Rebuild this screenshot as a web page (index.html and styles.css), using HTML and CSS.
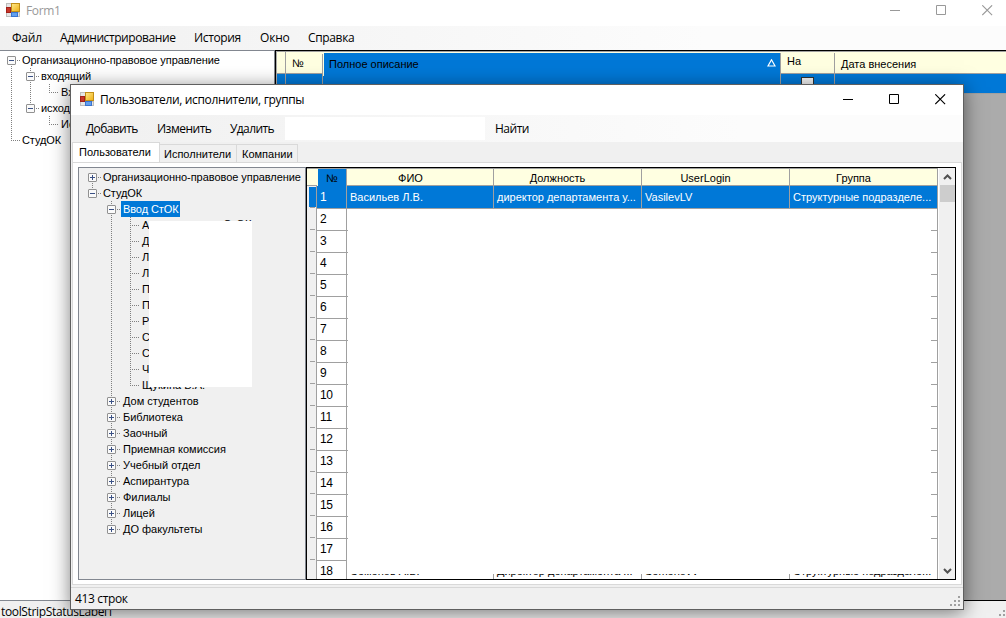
FILE: index.html
```
<!doctype html>
<html lang="ru">
<head>
	<meta charset="UTF-8">
	<title>Form1</title>
	<link rel="stylesheet" href="styles.css">
</head>
<body>
<svg width="0" height="0" class="defs">
	<defs>
		<linearGradient id="gold" x1="0" y1="0" x2="1" y2="1"><stop offset="0" stop-color="#ffe98c"/><stop offset="1" stop-color="#eeb013"/></linearGradient>
		<symbol id="form" viewBox="0 0 14 14">
			<rect width="14" height="14" fill="#bdbdbd"/>
			<path d="M1 1h4v3h-4zM1 10h4v3h-4zM12 10h1v3h-1z" fill="#e6e6e6"/>
			<rect x=".5" y="4.5" width="4" height="5" fill="#c8362a" stroke="#a3221a"/>
			<rect x="5.5" y=".5" width="8" height="8" fill="url(#gold)" stroke="#c28e16"/>
			<rect x="5.5" y="9.5" width="6" height="4" fill="#62a0ee" stroke="#3a74d0"/>
		</symbol>
		<symbol id="min" viewBox="0 0 11 11"><path d="M0 5.5h10" stroke="currentColor"/></symbol>
		<symbol id="max" viewBox="0 0 11 11"><path d="M.5 .5h9v9h-9z" fill="none" stroke="currentColor"/></symbol>
		<symbol id="close" viewBox="0 0 11 11"><path d="M.3 .3l9.8 9.8M10.1 .3l-9.8 9.8" stroke="currentColor" stroke-width="1.1"/></symbol>
		<symbol id="plus" viewBox="0 0 9 9"><rect x=".5" y=".5" width="8" height="8" rx=".5" fill="#fafafa" stroke="#919191"/><path d="M2 4.5h5M4.5 2v5" stroke="#3b5185"/></symbol>
		<symbol id="minus" viewBox="0 0 9 9"><rect x=".5" y=".5" width="8" height="8" rx=".5" fill="#fafafa" stroke="#919191"/><path d="M2 4.5h5" stroke="#3b5185"/></symbol>
		<symbol id="grip" viewBox="0 0 12 12"><path d="M8 0h2v2h-2zM4 4h2v2h-2zM8 4h2v2h-2zM0 8h2v2h-2zM4 8h2v2h-2zM8 8h2v2h-2z" fill="#a0a0a0"/></symbol>
	</defs>
</svg>
<div class="main">
	<div class="title">
		<svg class="form-icon" width="14" height="14"><use href="#form"/></svg>
		<span class="title-text">Form1</span>
		<div class="controls">
			<span class="ctl"><svg width="11" height="11"><use href="#min"/></svg></span>
			<span class="ctl"><svg width="11" height="11"><use href="#max"/></svg></span>
			<span class="ctl"><svg width="11" height="11"><use href="#close"/></svg></span>
		</div>
	</div>
	<div class="menu">
		<span class="m-file">Файл</span>
		<span class="m-admin">Администрирование</span>
		<span class="m-hist">История</span>
		<span class="m-win">Окно</span>
		<span class="m-help">Справка</span>
	</div>
	<div class="work">
		<div class="tree tree-main">
			<div class="node"><i class="c b"><svg width="9" height="9"><use href="#minus"/></svg></i><span class="org">Организационно-правовое управление</span></div>
			<div class="node"><i class="c v"></i><i class="c t b"><svg width="9" height="9"><use href="#minus"/></svg></i><span class="in">входящий</span></div>
			<div class="node"><i class="c v"></i><i class="c v"></i><i class="c t"></i><span>Вх</span></div>
			<div class="node"><i class="c v"></i><i class="c t"><svg width="9" height="9"><use href="#minus"/></svg></i><span class="in">исход</span></div>
			<div class="node"><i class="c v"></i><i class="c"></i><i class="c t"></i><span>Ис</span></div>
			<div class="node"><i class="c t"></i><span class="in">СтудОК</span></div>
		</div>
		<div class="mgrid">
			<div class="mhead">
				<div></div>
				<div class="m-num">№</div>
				<div class="m-full"><span>Полное описание</span><svg width="9" height="8" viewBox="0 0 9 8"><path d="M4.5 .8L8 7H1z" fill="none" stroke="#fff" stroke-width="1.2"/></svg></div>
				<div class="m-on">На</div>
				<div class="m-date">Дата внесения</div>
			</div>
			<div class="mrow"><div></div><div></div><div></div><div class="m-check"><b></b></div><div></div></div>
		</div>
	</div>
	<div class="status-main">toolStripStatusLabel1<svg width="12" height="12"><use href="#grip"/></svg></div>
</div>

<div class="dialog">
	<div class="title">
		<svg class="form-icon" width="14" height="14"><use href="#form"/></svg>
		<span class="title-text">Пользователи, исполнители, группы</span>
		<div class="controls">
			<span class="ctl"><svg width="11" height="11"><use href="#min"/></svg></span>
			<span class="ctl"><svg width="11" height="11"><use href="#max"/></svg></span>
			<span class="ctl"><svg width="11" height="11"><use href="#close"/></svg></span>
		</div>
	</div>
	<div class="tools">
		<span class="t-add">Добавить</span>
		<span class="t-edit">Изменить</span>
		<span class="t-del">Удалить</span>
		<div class="search"></div>
		<span class="t-find">Найти</span>
	</div>
	<div class="tabs">
		<div class="tab tab-on">Пользователи</div>
		<div class="tab tab-isp">Исполнители</div>
		<div class="tab tab-comp">Компании</div>
	</div>
	<div class="page">
		<div class="tree tree-users">
			<div class="node"><i class="c b"><svg width="9" height="9"><use href="#plus"/></svg></i><span class="org">Организационно-правовое управление</span></div>
			<div class="node"><i class="c t"><svg width="9" height="9"><use href="#minus"/></svg></i><span class="in">СтудОК</span></div>
			<div class="node"><i class="c"></i><i class="c t b"><svg width="9" height="9"><use href="#minus"/></svg></i><span class="sel">Ввод СтОК</span></div>
			<div class="node"><i class="c"></i><i class="c v"></i><i class="c t b"></i><span>А</span><span class="tail">СтОК</span></div>
			<div class="node"><i class="c"></i><i class="c v"></i><i class="c t b"></i><span>Д</span></div>
			<div class="node"><i class="c"></i><i class="c v"></i><i class="c t b"></i><span>Л</span></div>
			<div class="node"><i class="c"></i><i class="c v"></i><i class="c t b"></i><span>Л</span></div>
			<div class="node"><i class="c"></i><i class="c v"></i><i class="c t b"></i><span>П</span></div>
			<div class="node"><i class="c"></i><i class="c v"></i><i class="c t b"></i><span>П</span></div>
			<div class="node"><i class="c"></i><i class="c v"></i><i class="c t b"></i><span>Р</span></div>
			<div class="node"><i class="c"></i><i class="c v"></i><i class="c t b"></i><span>С</span></div>
			<div class="node"><i class="c"></i><i class="c v"></i><i class="c t b"></i><span>С</span></div>
			<div class="node"><i class="c"></i><i class="c v"></i><i class="c t b"></i><span>Ч</span></div>
			<div class="node"><i class="c"></i><i class="c v"></i><i class="c t"></i><span>Щукина В.А.</span></div>
			<div class="node"><i class="c"></i><i class="c t b"><svg width="9" height="9"><use href="#plus"/></svg></i><span>Дом студентов</span></div>
			<div class="node"><i class="c"></i><i class="c t b"><svg width="9" height="9"><use href="#plus"/></svg></i><span>Библиотека</span></div>
			<div class="node"><i class="c"></i><i class="c t b"><svg width="9" height="9"><use href="#plus"/></svg></i><span>Заочный</span></div>
			<div class="node"><i class="c"></i><i class="c t b"><svg width="9" height="9"><use href="#plus"/></svg></i><span>Приемная комиссия</span></div>
			<div class="node"><i class="c"></i><i class="c t b"><svg width="9" height="9"><use href="#plus"/></svg></i><span>Учебный отдел</span></div>
			<div class="node"><i class="c"></i><i class="c t b"><svg width="9" height="9"><use href="#plus"/></svg></i><span>Аспирантура</span></div>
			<div class="node"><i class="c"></i><i class="c t b"><svg width="9" height="9"><use href="#plus"/></svg></i><span>Филиалы</span></div>
			<div class="node"><i class="c"></i><i class="c t b"><svg width="9" height="9"><use href="#plus"/></svg></i><span>Лицей</span></div>
			<div class="node"><i class="c"></i><i class="c t"><svg width="9" height="9"><use href="#plus"/></svg></i><span>ДО факультеты</span></div>
			<div class="cover"></div>
		</div>
		<div class="ugrid">
			<div class="rows">
				<div class="uhead"><div></div><div class="h-sel">№</div><div>ФИО</div><div>Должность</div><div>UserLogin</div><div>Группа</div></div>
				<div class="urow on"><div class="rh"></div><div class="n">1</div><div>Васильев Л.В.</div><div>директор департамента у...</div><div>VasilevLV</div><div>Структурные подразделе...</div></div>
				<div class="urow"><div class="rh"></div><div class="n">2</div><div class="end"></div></div>
				<div class="urow"><div class="rh"></div><div class="n">3</div><div class="end"></div></div>
				<div class="urow"><div class="rh"></div><div class="n">4</div><div class="end"></div></div>
				<div class="urow"><div class="rh"></div><div class="n">5</div><div class="end"></div></div>
				<div class="urow"><div class="rh"></div><div class="n">6</div><div class="end"></div></div>
				<div class="urow"><div class="rh"></div><div class="n">7</div><div class="end"></div></div>
				<div class="urow"><div class="rh"></div><div class="n">8</div><div class="end"></div></div>
				<div class="urow"><div class="rh"></div><div class="n">9</div><div class="end"></div></div>
				<div class="urow"><div class="rh"></div><div class="n">10</div><div class="end"></div></div>
				<div class="urow"><div class="rh"></div><div class="n">11</div><div class="end"></div></div>
				<div class="urow"><div class="rh"></div><div class="n">12</div><div class="end"></div></div>
				<div class="urow"><div class="rh"></div><div class="n">13</div><div class="end"></div></div>
				<div class="urow"><div class="rh"></div><div class="n">14</div><div class="end"></div></div>
				<div class="urow"><div class="rh"></div><div class="n">15</div><div class="end"></div></div>
				<div class="urow"><div class="rh"></div><div class="n">16</div><div class="end"></div></div>
				<div class="urow"><div class="rh"></div><div class="n">17</div><div class="end"></div></div>
				<div class="urow last"><div class="rh"></div><div class="n">18</div><div>Семенов А.В.</div><div>Директор департамента ...</div><div>SemenovV</div><div>Структурные подразделе...</div><b class="strip"></b></div>
			</div>
			<div class="scroll">
				<svg width="9" height="6" viewBox="0 0 9 6"><path d="M1 5l3.5-3.5L8 5" fill="none" stroke="#505050" stroke-width="2"/></svg>
				<div class="thumb"></div>
				<svg class="down" width="9" height="6" viewBox="0 0 9 6"><path d="M1 1l3.5 3.5L8 1" fill="none" stroke="#505050" stroke-width="2"/></svg>
			</div>
		</div>
	</div>
	<div class="status">413 строк<svg width="12" height="12"><use href="#grip"/></svg></div>
</div>
</body>
</html>
```
FILE: styles.css
```
*{
	box-sizing:border-box;
}
body{
	margin:0;
	width:1006px;
	height:618px;
	overflow:hidden;
	position:relative;
	font:11px "Liberation Sans", Arial, sans-serif;
	color:#000;
	white-space:nowrap;
}
.defs{
	position:absolute;
}
svg{
	display:block;
	flex:none;
}

/*main window*/
.main{
	height:618px;
	display:flex;
	flex-direction:column;
	background:#fff;
}
.title{
	display:flex;
	background:#fff;
	font:12px "Open Sans", "Noto Sans", sans-serif;
	letter-spacing:-.34px;
	flex:none;
}
.main .title{
	height:26px;
	padding:3px 0 0 6px;
	color:#999;
}
.form-icon{
	margin-right:6px;
}
.title-text{
	line-height:16px;
}
.controls{
	display:flex;
}
.main .controls{
	margin:2px -4px 0 auto;
}
.ctl{
	width:46px;
	display:flex;
	justify-content:center;
}
.menu,.tools,.status,.status-main{
	font:12px "Open Sans", "Noto Sans", sans-serif;
	letter-spacing:-.35px;
	display:flex;
	flex:none;
}
.menu{
	height:24px;
	line-height:24px;
	padding-left:12px;
	background:linear-gradient(90deg,#f0f0f0,#fcfcfc 70%);
}
.m-file{
	width:48px;
	letter-spacing:-.2px;
}
.m-admin{
	width:134px;
	letter-spacing:-.42px;
}
.m-hist{width:66px;}
.m-win{
	width:48px;
	letter-spacing:-.2px;
}
.work{
	flex:1;
	display:flex;
}
.tree-main{
	width:275px;
	border-top:1px solid #828790;
	border-right:1px solid #828790;
	border-bottom:1px solid #828790;
	padding:1px 0 0 2px;
}
.mgrid{
	flex:1;
	background:#ababab;
	border-left:1px solid #000;
	border-top:1px solid #000;
	border-bottom:1px solid #000;
	padding-left:1px;
}
.mhead,.mrow{
	display:grid;
	grid-template-columns:9px 37px 458px 54px 1fr;
}
.mhead{
	height:23px;
	background:#ffffe1;
	border-top:1px solid #a0a0a0;
	border-bottom:1px solid #a0a0a0;
	line-height:24px;
}
.mhead>div,.mrow>div{
	border-right:1px solid #a0a0a0;
}
.mhead .m-num{
	padding-left:6px;
	margin:2px 0 1px;
	line-height:19px;
}
.mhead .m-full{
	background:#0078d7;
	background-clip:padding-box;
	border-left:1px solid #ffffe1;
	margin-top:1px;
	line-height:22px;
	padding:0 4px 0 5px;
	display:flex;
	justify-content:space-between;
}
.m-full svg{
	margin-top:6px;
}
.mhead .m-on{
	padding-left:6px;
	line-height:17px;
	margin-top:1px;
}
.mhead .m-date{
	padding-left:6px;
	border:0;
}
.mrow{
	height:20px;
	background:#0078d7;
	border-bottom:1px solid #a0a0a0;
}
.mrow>div:last-child{
	border:0;
}
.m-check{
	display:flex;
	justify-content:center;
	padding-top:3px;
}
.m-check b{
	width:13px;
	height:13px;
	border:1px solid #333;
	background:#f4f4f4;
}
.status-main{
	height:17px;
	padding:0 0 0 1px;
	background:#f0f0f0;
	line-height:22px;
	justify-content:space-between;
}
.status-main svg{
	margin:5px -5px 0 0;
}

/*tree*/
.node{
	display:flex;
	height:16px;
	line-height:16px;
}
.node span{
	padding:0 2px;
}
.node .org{
	letter-spacing:-.05px;
	padding-left:1px;
}
.node .in{
	letter-spacing:-.1px;
	padding-left:1px;
}
.c{
	width:19px;
	height:16px;
	flex:none;
	padding:4px 0 0 5px;
	--v:repeating-linear-gradient(180deg,#808080 0 1px,transparent 1px 2px);
	--h:repeating-linear-gradient(90deg,#808080 0 1px,transparent 1px 2px);
}
.c.t{
	background:var(--v) 9px 0/1px 9px no-repeat,var(--h) 9px 8px/9px 1px no-repeat;
}
.c.b{
	background:var(--v) 9px 8px/1px 8px no-repeat,var(--h) 9px 8px/9px 1px no-repeat;
}
.c.t.b{
	background:var(--v) 9px 0/1px 16px no-repeat,var(--h) 9px 8px/9px 1px no-repeat;
}
.c.v{
	background:var(--v) 9px 0/1px 16px no-repeat;
}
.node .sel{
	background:#0078d7;
	color:#fff;
	letter-spacing:-.1px;
}
.node .tail{
	margin:-1px 0 0 70px;
}

/*dialog*/
.dialog{
	position:absolute;
	left:70px;
	top:84px;
	width:894px;
	height:526px;
	border:1px solid #5f5f5f;
	background:#f0f0f0;
	box-shadow:0 3px 18px rgba(0,0,0,.5);
	display:flex;
	flex-direction:column;
}
.dialog .title{
	height:30px;
	padding:7px 0 0 9px;
}
.dialog .controls{
	margin:2px 0 0 auto;
}
.tools{
	height:27px;
	line-height:28px;
	padding-left:15px;
	background:linear-gradient(90deg,#f0f0f0,#fcfcfc 75%);
}
.t-add{
	width:71px;
	letter-spacing:-.6px;
}
.t-edit{
	width:73px;
	letter-spacing:-.5px;
}
.t-del{
	width:55px;
	letter-spacing:-.6px;
}
.t-find{letter-spacing:-.5px;}
.search{
	width:200px;
	height:23px;
	margin:2px 10px 0 0;
	background:#fff;
}
.tabs{
	height:20px;
	display:flex;
	align-items:flex-end;
	padding-left:1px;
}
.tab{
	height:18px;
	line-height:19px;
	border:1px solid #d9d9d9;
	border-left:0;
	border-bottom:0;
	padding-left:4px;
}
.tab-on{
	width:88px;
	height:20px;
	background:#fff;
	border-left:1px solid #d9d9d9;
	padding-left:6px;
}
.tab-isp{width:77px;}
.tab-comp{
	width:61px;
	padding-left:5px;
}
.page{
	height:423px;
	margin:0 1px;
	background:#fff;
	border:1px solid #d9d9d9;
	padding:4px 5px 4px 5px;
	display:flex;
}
.tree-users{
	position:relative;
	width:228px;
	border:1px solid #828790;
	background:#f0f0f0;
	padding:1px 0 0 4px;
}
.cover{
	position:absolute;
	left:70px;
	top:53px;
	width:103px;
	height:166px;
	background:#fff;
}

/*users grid*/
.ugrid{
	flex:1;
	border:1px solid #000;
	display:flex;
	overflow:hidden;
}
.rows{
	width:631px;
	overflow:hidden;
}
.uhead,.urow{
	display:grid;
	grid-template-columns:10px 30px 147px 148px 148px 148px;
}
.uhead{
	height:18px;
	background:#ffffe1;
	border-top:1px solid #a0a0a0;
	border-bottom:1px solid #a0a0a0;
	text-align:center;
	line-height:18px;
}
.uhead>div{
	border-right:1px solid #a0a0a0;
	padding-right:19px;
}
.uhead div:nth-child(n+4){
	padding-right:20px;
}
.uhead .h-sel{
	background:#0078d7;
	background-clip:padding-box;
	border-left:1px solid #ffffe1;
	padding:0;
}
.urow{
	height:22px;
	line-height:22px;
}
.urow>div{
	border-right:1px solid #a0a0a0;
	border-bottom:1px solid #a0a0a0;
	padding-left:3px;
}
.urow .n{
	font-size:12px;
	letter-spacing:-.4px;
}
.urow .rh{
	background:linear-gradient(#f0f0f0,#f0f0f0) padding-box;
	border-bottom:0;
	padding:21px 1px 0 3px;
}
.urow .rh::before{
	content:"";
	display:block;
	height:1px;
	background:#a0a0a0;
}
.urow .end{
	grid-column:3/7;
	border-bottom-color:transparent;
	background:linear-gradient(#a0a0a0,#a0a0a0) 0 100%/1px 1px no-repeat border-box,linear-gradient(#a0a0a0,#a0a0a0) 100% 100%/7px 1px no-repeat border-box;
}
.urow.on{
	color:#fff;
}
.urow.on>div{
	background:#0078d7;
}
.urow.on .rh{
	background:linear-gradient(#0078d7,#0078d7) 2px 1px/7px 20px no-repeat #f0f0f0;
}
.last{
	position:relative;
}
.last>div{
	border-bottom:0;
}
.strip{
	position:absolute;
	left:40px;
	top:0;
	width:590px;
	height:14px;
	background:#fff;
}
.scroll{
	width:17px;
	padding:6px 0 5px;
	background:#f0f0f0;
	border-left:1px solid #fff;
	display:flex;
	flex-direction:column;
	align-items:center;
}
.thumb{
	width:15px;
	height:17px;
	margin-top:5px;
	background:#cdcdcd;
}
.down{
	margin-top:auto;
}
.status{
	margin-top:2px;
	border-top:1px solid #d7d7d7;
	flex:1;
	padding:0 1px 0 4px;
	line-height:22px;
	justify-content:space-between;
}
.status svg{
	margin-top:8px;
}
```
